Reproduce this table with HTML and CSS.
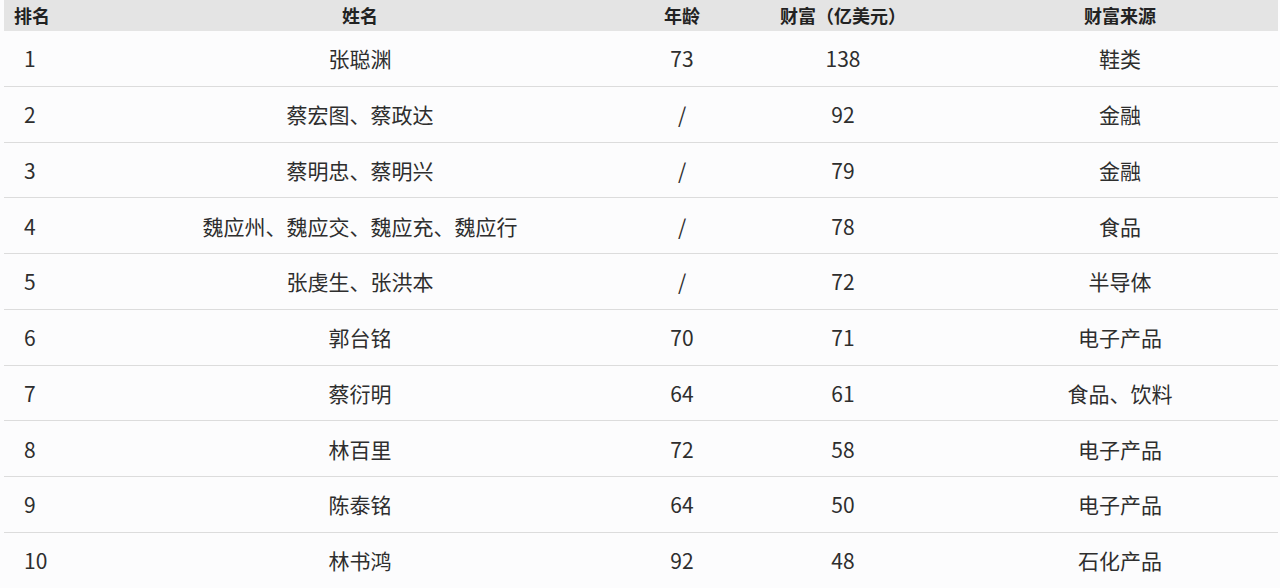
FILE: index.html
```html
<!DOCTYPE html>
<html lang="zh-CN">
<head>
<meta charset="utf-8">
<title>排名</title>
<link rel="stylesheet" href="styles.css">
</head>
<body>
<table class="rank-table">
  <colgroup>
    <col class="c-rank"><col class="c-name"><col class="c-age"><col class="c-wealth"><col class="c-src">
  </colgroup>
  <thead>
    <tr>
      <th class="rank">排名</th><th>姓名</th><th>年龄</th><th>财富（亿美元）</th><th>财富来源</th>
    </tr>
  </thead>
  <tbody>
    <tr><td class="rank">1</td><td>张聪渊</td><td>73</td><td>138</td><td>鞋类</td></tr>
    <tr><td class="rank">2</td><td>蔡宏图、蔡政达</td><td>/</td><td>92</td><td>金融</td></tr>
    <tr><td class="rank">3</td><td>蔡明忠、蔡明兴</td><td>/</td><td>79</td><td>金融</td></tr>
    <tr><td class="rank">4</td><td>魏应州、魏应交、魏应充、魏应行</td><td>/</td><td>78</td><td>食品</td></tr>
    <tr><td class="rank">5</td><td>张虔生、张洪本</td><td>/</td><td>72</td><td>半导体</td></tr>
    <tr><td class="rank">6</td><td>郭台铭</td><td>70</td><td>71</td><td>电子产品</td></tr>
    <tr><td class="rank">7</td><td>蔡衍明</td><td>64</td><td>61</td><td>食品、饮料</td></tr>
    <tr><td class="rank">8</td><td>林百里</td><td>72</td><td>58</td><td>电子产品</td></tr>
    <tr><td class="rank">9</td><td>陈泰铭</td><td>64</td><td>50</td><td>电子产品</td></tr>
    <tr><td class="rank">10</td><td>林书鸿</td><td>92</td><td>48</td><td>石化产品</td></tr>
  </tbody>
</table>
</body>
</html>
```
FILE: styles.css
```css
html, body {
  margin: 0;
  padding: 0;
  background: #fcfcfd;
}
body {
  font-family: "Noto Sans CJK SC", "Noto Sans", sans-serif;
  color: #2e2e2e;
}
.rank-table {
  margin-left: 4px;
  width: 1274px;
  border-collapse: collapse;
  table-layout: fixed;
}
.c-rank { width: 76px; }
.c-name { width: 560px; }
.c-age { width: 84px; }
.c-wealth { width: 238px; }
.c-src { width: 316px; }
.rank-table th {
  background: #e4e4e4;
  height: 31px;
  padding: 0;
  font-size: 18px;
  font-weight: 700;
  color: #222;
  text-align: center;
  line-height: 31px;
}
.rank-table th.rank {
  text-align: left;
  padding-left: 10px;
}
.rank-table td {
  height: 54.75px;
  padding: 0;
  font-size: 21px;
  text-align: center;
  border-bottom: 1px solid #dcdcdc;
  line-height: 54px;
}
.rank-table tbody tr:last-child td {
  border-bottom: none;
}
.rank-table td.rank {
  text-align: left;
  padding-left: 20px;
}
```
